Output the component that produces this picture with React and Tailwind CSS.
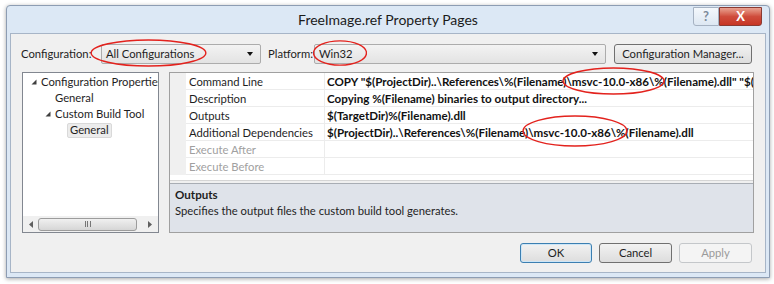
import clsx from "clsx";

const cn = clsx;

const FONT = "font-['Lato','Open_Sans',sans-serif]";

const Combo = ({ value, className }) => (
  <div
    className={cn(
      "h-[20px] flex items-center justify-between pl-[4px] pr-[7px] rounded-[2px] border border-[#acacac] bg-gradient-to-b from-[#f3f3f3] to-[#e3e3e3] text-[#1e1e1e]",
      className
    )}
  >
    <span>{value}</span>
    <span className="w-0 h-0 border-l-[3.5px] border-r-[3.5px] border-t-[4px] border-l-transparent border-r-transparent border-t-[#111]" />
  </div>
);

const Button = ({ children, className, disabled, primary }) => (
  <div
    className={cn(
      "h-[20px] flex items-center justify-center rounded-[3px] border whitespace-nowrap",
      disabled
        ? "border-[#c4c7ca] bg-[#f4f4f4] text-[#9a9a9a]"
        : "bg-gradient-to-b from-[#f2f2f2] to-[#dddddd] text-[#1e1e1e]",
      primary ? "border-[#3c7fb1] shadow-[inset_0_0_0_1px_#cde6f7]" : !disabled && "border-[#707070]",
      className
    )}
  >
    {children}
  </div>
);

const Tri = ({ className }) => (
  <svg width="6" height="6" viewBox="0 0 6 6" className={cn("shrink-0", className)}>
    <path d="M5.5 0.5 L5.5 5.5 L0.5 5.5 Z" fill="#404040" />
  </svg>
);

const rows = [
  { name: "Command Line", value: "COPY \"$(ProjectDir)..\\References\\%(Filename)\\msvc-10.0-x86\\%(Filename).dll\" \"$(TargetDir)%(Filename).dll\"" },
  { name: "Description", value: "Copying %(Filename) binaries to output directory..." },
  { name: "Outputs", value: "$(TargetDir)%(Filename).dll" },
  { name: "Additional Dependencies", value: "$(ProjectDir)..\\References\\%(Filename)\\msvc-10.0-x86\\%(Filename).dll" },
  { name: "Execute After", value: "", dim: true },
  { name: "Execute Before", value: "", dim: true },
];

const Ellipse = ({ className }) => (
  <svg className={cn("absolute pointer-events-none", className)} viewBox="0 0 100 30" preserveAspectRatio="none">
    <ellipse cx="50" cy="15" rx="49" ry="14" fill="none" stroke="#e3221d" strokeWidth="1.4" vectorEffect="non-scaling-stroke" />
  </svg>
);

export default function App() {
  return (
    <div className={cn("w-[774px] h-[284px] bg-white relative overflow-hidden text-[11.25px] leading-none", FONT)}>
      <div className="ml-[6px] mt-[5px] w-[764px] h-[273px] bg-[#dce8f5] border border-[#8d9db3] rounded-t-[4px] shadow-[0_1px_4px_rgba(0,0,0,0.35)] flex flex-col">
        {/* title bar */}
        <div className="h-[27px] flex items-start">
          <div className="flex-1 pt-[7px] text-center text-[14px] text-[#1b1b1b] pl-[76px]">FreeImage.ref Property Pages</div>
          <div className="flex mr-[7px] mt-[1px]">
            <div className="w-[26px] h-[19px] border border-[#a6b2c2] rounded-bl-[3px] bg-gradient-to-b from-[#f4f8fc] to-[#dde7f2] flex items-center justify-center text-[#7d8a99] text-[13px] font-bold">?</div>
            <div className="w-[43px] h-[19px] border border-[#8a3a32] rounded-br-[3px] bg-gradient-to-b from-[#e8a191] via-[#cf4c3c] to-[#c73524] flex items-center justify-center text-white text-[13px] font-bold">X</div>
          </div>
        </div>

        {/* client area */}
        <div className="flex-1 mx-[3px] mb-[4px] bg-[#f0f0f0] border border-[#a7b5c7] flex flex-col pt-[10px] pl-[10px] pr-[13px]">
          <div className="flex items-center h-[20px]">
            <span className="w-[80px] text-[#1e1e1e]">Configuration:</span>
            <Combo value="All Configurations" className="w-[160px]" />
            <span className="ml-[7px] w-[46px] text-[#1e1e1e]">Platform:</span>
            <Combo value="Win32" className="w-[292px]" />
            <Button className="ml-[8px] w-[138px]">Configuration Manager...</Button>
          </div>

          <div className="flex mt-[8px] h-[161px] gap-[10px] pl-[1px]">
            {/* tree */}
            <div className="w-[137px] border border-[#828790] bg-white flex flex-col">
              <div className="flex-1 overflow-hidden pt-[1px] text-[#1e1e1e] whitespace-nowrap">
                <div className="h-[16px] flex items-center pl-[8px]">
                  <Tri className="mr-[4px]" />
                  <span>Configuration Properties</span>
                </div>
                <div className="h-[16px] flex items-center pl-[32px]">General</div>
                <div className="h-[16px] flex items-center pl-[22px]">
                  <Tri className="mr-[4px]" />
                  <span>Custom Build Tool</span>
                </div>
                <div className="h-[16px] flex items-center pl-[44px]">
                  <span className="px-[2px] h-[15px] flex items-center border border-[#d9d9d9] rounded-[2px] bg-[#ececec]">General</span>
                </div>
              </div>
              <div className="h-[16px] bg-[#f0f0f0] flex items-center px-[6px]">
                <svg width="4" height="7" viewBox="0 0 4 7"><path d="M4 0 L0 3.5 L4 7 Z" fill="#606060" /></svg>
                <div className="ml-[5px] w-[99px] h-[13px] rounded-[3px] border border-[#9c9c9c] bg-gradient-to-b from-[#f0f0f0] to-[#d6d6d6] flex items-center justify-center gap-[1.5px]">
                  <span className="w-[1px] h-[6px] bg-[#777]" />
                  <span className="w-[1px] h-[6px] bg-[#777]" />
                  <span className="w-[1px] h-[6px] bg-[#777]" />
                </div>
                <div className="flex-1" />
                <svg width="4" height="7" viewBox="0 0 4 7"><path d="M0 0 L4 3.5 L0 7 Z" fill="#606060" /></svg>
              </div>
            </div>

            {/* property grid */}
            <div className="w-[585px] border border-[#a0a0a0] bg-white flex flex-col">
              <div className="flex flex-col">
                {rows.map((r) => (
                  <div key={r.name} className="flex h-[17px]">
                    <div className="w-[16px] bg-[#f0f0f0]" />
                    <div className={cn("w-[139px] border-b border-r border-[#ececec] pl-[3px] pt-[1px] flex items-center whitespace-nowrap", r.dim ? "text-[#a0a0a0]" : "text-[#1e1e1e]")}>
                      {r.name}
                    </div>
                    <div className="flex-1 border-b border-[#ececec] pl-[2px] pt-[1px] flex items-center font-bold text-[11.6px] text-[#111] whitespace-nowrap overflow-hidden">
                      {r.value}
                    </div>
                  </div>
                ))}
              </div>
              <div className="h-[5px]" />
              <div className="h-[3px] border-t border-[#d5d5d5] bg-[#f0f0f0]" />
              <div className="flex-1 border-t border-[#a8adb4] bg-[#dfe3ea] pl-[5px] pt-[5px] text-[#1e1e1e]">
                <div className="font-bold text-[11.6px]">Outputs</div>
                <div className="mt-[4px]">Specifies the output files the custom build tool generates.</div>
              </div>
            </div>
          </div>

          <div className="flex justify-end mt-[10px] gap-[7px]">
            <Button primary className="w-[72px]">OK</Button>
            <Button className="w-[73px]">Cancel</Button>
            <Button disabled className="w-[73px]">Apply</Button>
          </div>
        </div>
      </div>

      <Ellipse className="left-[90px] top-[39px] w-[117px] h-[28px]" />
      <Ellipse className="left-[313px] top-[40px] w-[54px] h-[26px]" />
      <Ellipse className="left-[562px] top-[67px] w-[103px] h-[28px]" />
      <Ellipse className="left-[522px] top-[115px] w-[106px] h-[32px]" />
    </div>
  );
}
